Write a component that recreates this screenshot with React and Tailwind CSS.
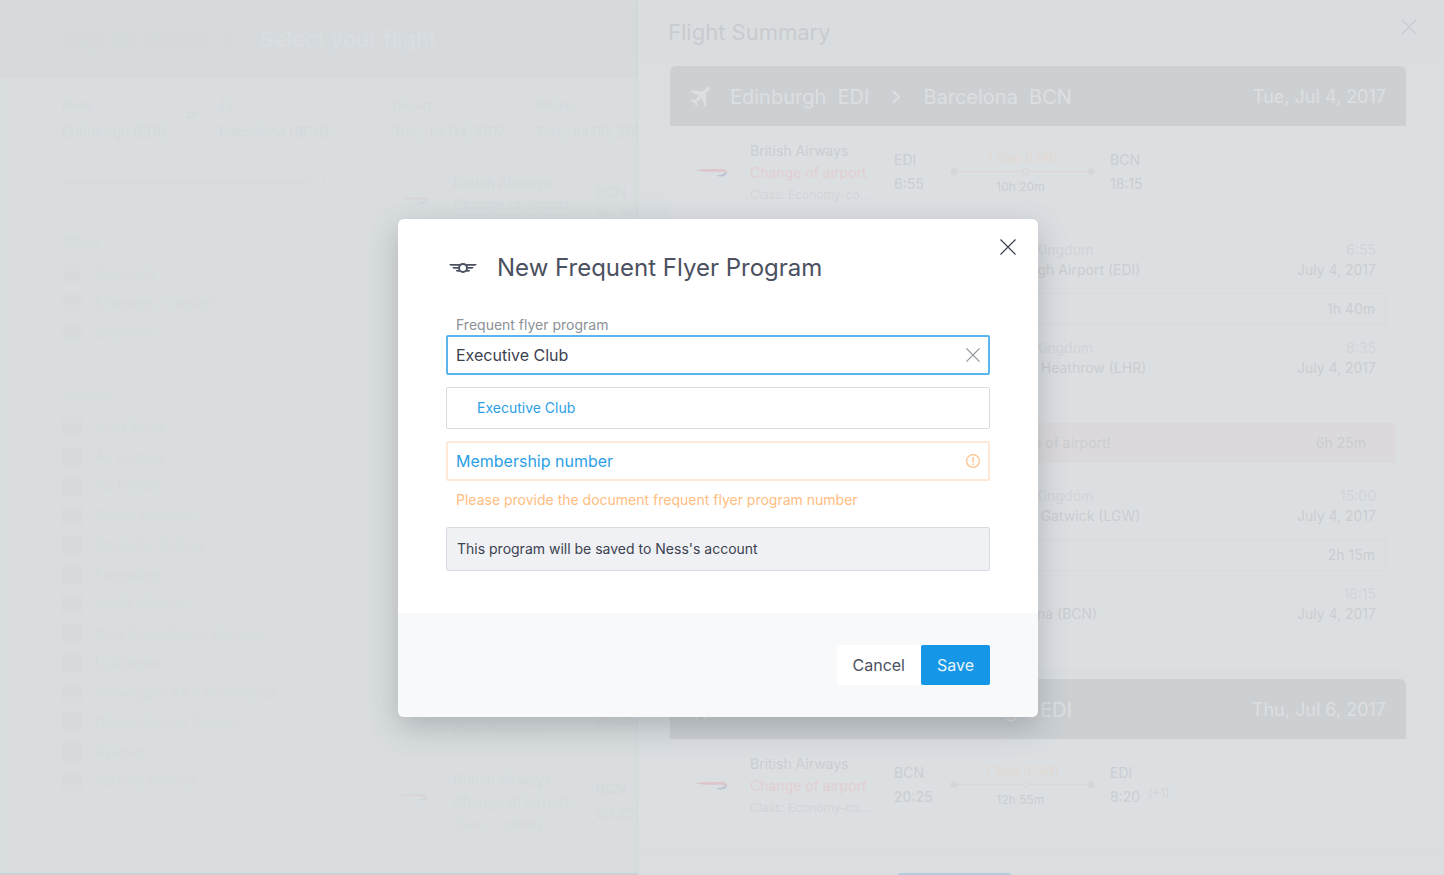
import React from "react";

const airlines = [
  "Aer Lingus",
  "Air Europa",
  "Air France",
  "British Airways",
  "Brussels Airlines",
  "Eurowings",
  "Iberia Airlines",
  "KLM Royal Dutch Airlines",
  "Lufthansa",
  "Norwegian Air International",
  "Norwegian Air Shuttle",
  "Ryanair",
  "Turkish Airlines",
];

function Cross({ className }) {
  return (
    <svg className={className} viewBox="0 0 16 16" fill="none" stroke="currentColor" strokeWidth="1.2" aria-hidden="true">
      <path d="M0.5 0.5 L15.5 15.5 M15.5 0.5 L0.5 15.5" vectorEffect="non-scaling-stroke" />
    </svg>
  );
}

function Wings() {
  return (
    <svg className="h-3 w-7" viewBox="0 0 28 12" aria-hidden="true">
      <path
        d="M.6 2h10.600L10 3.700H2.200C1.200 3.700.2 2.900.6 2zM27.400 2H16.800L18 3.700h7.800c1 0 2-.8 1.600-1.700zM3.600 5h5.600l-.2 1.700H5.200C4.200 6.700 3.400 6 3.600 5zM24.400 5h-5.600l.2 1.700h3.800c1 0 1.800-.7 1.600-1.700zM7 8h2.700l1.300 1.700H8.600C7.600 9.700 6.800 9 7 8zM21 8h-2.700L17 9.700h2.400c1 0 1.800-.7 1.600-1.700z"
        fill="#4b5160"
      />
      <circle cx="14" cy="5.900" r="4" fill="none" stroke="#4b5160" strokeWidth="2" />
    </svg>
  );
}

function Plane() {
  return (
    <svg className="size-5" viewBox="0 0 20 20" fill="#dcdfe2" aria-hidden="true">
      <path d="M19.6.4c-.7-.7-2.2-.3-3.200.7L12.900 4.600 1.400 3.300 0 4.800l9.100 3.700-3.900 4.500-3.700-.4-1.100 1.100 3.600 2.100L6.200 19.600l1.100-1.100-.4-3.700 4.600-3.900L15.200 20l1.500-1.400L15.400 7.100l3.500-3.500c1-1 1.400-2.500.7-3.200z" />
    </svg>
  );
}

function BritishAirwaysMark({ className }) {
  return (
    <svg className={className} viewBox="0 0 32 10" aria-hidden="true">
      <path d="M0 2.200C4 1 10 1.400 17 1.100c5-.2 9-.4 11.500.3 3 .9 3.500 3 1.900 4.800-.2-1.700-1.800-2.300-4.800-2.400C18 3.600 7 4.600 0 2.200z" fill="#dec5c9" />
      <path d="M20 7.300c3 .3 6.500-.4 9.300-2.700l1.600.2C30.300 8 24.500 10.200 20 7.300z" fill="#bbc5d4" />
    </svg>
  );
}

function ResultCard() {
  return (
    <div className="flex text-[#d5d9dc]">
      <BritishAirwaysMark className="mt-6 h-[9px] w-7 opacity-30" />
      <div className="ml-[25px] flex w-[143px] flex-col text-sm leading-[22px]">
        <span>British Airways</span>
        <span className="text-[#d6dadd]">Change of airport</span>
        <span className="text-xs leading-[22px] text-[#d7dbdd]">Class: Economy</span>
      </div>
      <div className="flex flex-col pt-2 text-sm leading-6">
        <span>BCN</span>
        <span>20:25</span>
      </div>
    </div>
  );
}

function SearchField({ label, value, className }) {
  return (
    <div className={className}>
      <div className="text-xs leading-5">{label}</div>
      <div className="mt-1 text-sm leading-6 whitespace-nowrap">{value}</div>
    </div>
  );
}

function SearchPage() {
  return (
    <main className="min-h-screen text-[#d6dadc]">
      <header className="flex h-[78px] items-center bg-[#d6dadd] pl-16 text-[22px]">
        <span className="w-[196px] text-[#d5d9dc]">Trip ID: 21445 &nbsp;/</span>
        <h1 className="text-[#dadee1]">Select your flight</h1>
      </header>
      <div className="flex pt-[18px] pl-[62px] text-[#d5d9dc]">
        <SearchField label="From" value="Edinburgh (EDI)" className="w-[124px]" />
        <span className="mt-2 w-[33px] text-sm">⇄</span>
        <SearchField label="To" value="Barcelona (BCN)" className="w-[174px]" />
        <SearchField label="Depart" value="Tue, Jul 04, 2017" className="w-[142px]" />
        <SearchField label="Return" value="Thu, Jul 06, 2017" />
      </div>
      <div className="flex pt-7 pl-[62px]">
        <aside className="w-[338px]">
          <div className="mt-[2px] flex w-[263px] items-center">
            <div className="h-px flex-1 bg-[#d5d9dc]" />
            <div className="size-4 rounded-full border border-[#d7dbdd]" />
          </div>
          <h2 className="mt-[42px] text-sm leading-5">Class</h2>
          <ul className="mt-[11px] flex flex-col gap-[10px] text-sm leading-5">
            {["Economy", "Economy-comfort", "Business"].map((name) => (
              <li key={name} className="flex items-center gap-[13px] text-[#d7dbdd]">
                <span className="size-5 rounded-full bg-[#d7dbde]" />
                {name}
              </li>
            ))}
          </ul>
          <h2 className="mt-[43px] text-sm leading-5">Airlines</h2>
          <ul className="mt-[11px] flex h-[374px] flex-col justify-between text-sm leading-5">
            {airlines.map((name) => (
              <li key={name} className="flex items-center gap-[13px] text-[#d7dbdd]">
                <span className="size-5 bg-[#d7dbde]" />
                {name}
              </li>
            ))}
          </ul>
        </aside>
        <section className="flex flex-col">
          <ResultCard />
          <div className="h-[438px]" />
          <ResultCard />
          <div className="h-[27px]" />
          <ResultCard />
        </section>
      </div>
    </main>
  );
}

function Route({ from, to, date }) {
  return (
    <header className="flex h-[60px] items-center rounded-t-md bg-[#ccd0d3] px-5 pt-[2px] text-xl text-[#dcdfe2]">
      <Plane />
      <h3 className="ml-5 flex items-center whitespace-pre">
        {from}
        <svg className="mx-[21px] h-[14px] w-3" viewBox="0 0 12 14" fill="none" stroke="currentColor" strokeWidth="2" aria-hidden="true">
          <path d="M3 1l6 6-6 6" />
        </svg>
        {to}
      </h3>
      <span className="ml-auto text-lg">{date}</span>
    </header>
  );
}

function Leg({ from, depart, to, arrive, plus, stop, duration, lineColor }) {
  return (
    <div className="flex h-[90px] pl-[26px] pt-[14px] text-sm text-[#cacdd1]">
      <BritishAirwaysMark className="mt-7 h-[10px] w-8" />
      <div className="ml-[22px] flex w-36 flex-col leading-[22px]">
        <span>British Airways</span>
        <span className="text-[#e2ced1]">Change of airport</span>
        <span className="text-xs leading-[22px] text-[#d1d4d8]">Class: Economy-co...</span>
      </div>
      <div className="flex w-14 flex-col pt-2 leading-6">
        <span>{from}</span>
        <span>{depart}</span>
      </div>
      <div className="flex w-[145px] flex-col items-center pt-[10px] text-xs leading-4">
        <span className="text-[#e3d8cf]">{stop}</span>
        <svg className="h-[9px] w-full" viewBox="0 0 145 9" aria-hidden="true">
          <path d="M7 5.500h131" stroke={lineColor} />
          <circle cx="4" cy="5.500" r="3.500" fill="#d3d7da" />
          <circle cx="76" cy="5.500" r="3" fill="#dcdfe2" stroke="#d3d7da" />
          <circle cx="141" cy="5.500" r="3.500" fill="#d3d7da" />
        </svg>
        <span className="mt-1 pr-1">{duration}</span>
      </div>
      <div className="ml-[15px] flex flex-col pt-2 leading-6">
        <span>{to}</span>
        <span className="flex">
          {arrive}
          {plus && <span className="ml-2 text-xs leading-4 text-[#d1d4d8]">{plus}</span>}
        </span>
      </div>
    </div>
  );
}

function Stop({ country, airport, time }) {
  return (
    <div className="flex justify-between pr-[30px] pl-[317px] text-sm leading-5 text-[#cacdd1]">
      <div>
        <div className="text-[#d1d4d8]">{country}</div>
        <div>{airport}</div>
      </div>
      <div className="text-right">
        <div className="text-[#d1d4d8]">{time}</div>
        <div>July 4, 2017</div>
      </div>
    </div>
  );
}

function FlightTime({ children }) {
  return (
    <div className="mx-5 flex h-8 items-center justify-end border border-[#d7dadd] pr-[10px] text-sm text-[#cacdd1]">
      {children}
    </div>
  );
}

function FlightSummary() {
  return (
    <section className="absolute inset-y-0 right-0 w-[806px] overflow-hidden bg-[#dadee1] shadow-[0_0_6px_rgba(80,90,100,0.05)]">
      <header className="flex h-[57px] items-start justify-between bg-[#dadddf] pr-[27px] pl-[30px]">
        <h2 className="mt-4 text-[22px] leading-8 text-[#c8cbcf]">Flight Summary</h2>
        <button type="button" aria-label="Close summary" className="mt-[19px] text-[#c8cbcf]">
          <Cross className="size-4" />
        </button>
      </header>
      <div className="flex flex-col gap-[10px] border-b border-[#d7dbdd] pt-[9px] pr-[38px] pl-8">
        <article className="bg-[#dcdfe2]">
          <Route from="Edinburgh  EDI" to="Barcelona  BCN" date="Tue, Jul 4, 2017" />
          <Leg from="EDI" depart="6:55" to="BCN" arrive="18:15" stop="1 Stop (LHR)" duration="10h 20m" lineColor="#e0d5d6" />
          <div className="flex flex-col border-b border-[#d9dcdf] pt-6 pb-11">
            <Stop country="United Kingdom" airport="Edinburgh Airport (EDI)" time="6:55" />
            <div className="py-[13px]">
              <FlightTime>1h 40m</FlightTime>
            </div>
            <Stop country="United Kingdom" airport="London Heathrow (LHR)" time="8:35" />
            <div className="mx-[10px] mt-[45px] mb-[23px] flex h-10 items-center justify-between bg-[#dcd9dc] pr-[30px] pl-[310px] text-sm text-[#cacdd1]">
              <span>Change of airport!</span>
              <span>6h 25m</span>
            </div>
            <Stop country="United Kingdom" airport="London Gatwick (LGW)" time="15:00" />
            <div className="py-[13px]">
              <FlightTime>2h 15m</FlightTime>
            </div>
            <Stop country="Spain" airport="Barcelona (BCN)" time="18:15" />
          </div>
        </article>
        <article className="bg-[#dcdfe2] pb-5">
          <Route from="Barcelona  BCN" to="Edinburgh  EDI" date="Thu, Jul 6, 2017" />
          <Leg from="BCN" depart="20:25" to="EDI" arrive="8:20" plus="(+1)" stop="1 Stop (LGW)" duration="12h 55m" lineColor="#d6dadd" />
        </article>
      </div>
      <div className="mt-[23px] ml-[259px] h-8 w-[115px] rounded-sm bg-[#b4cbdc]" />
    </section>
  );
}

function ProgramDialog() {
  return (
    <div className="absolute inset-0 flex items-start justify-center pt-[219px] pr-2">
      <form
        role="dialog"
        aria-labelledby="dialog-title"
        className="relative w-full max-w-[640px] overflow-hidden rounded-md bg-white text-[#3c4250] shadow-[0_10px_30px_rgba(70,80,85,0.3)]"
        onSubmit={(event) => event.preventDefault()}
      >
        <button type="button" aria-label="Close" className="absolute top-5 right-[22px] text-[#3c4250]">
          <Cross className="size-4" />
        </button>
        <div className="px-12 pt-[33px] pb-[42px]">
          <div className="flex items-center gap-5 pl-[3px] text-[#4b5160]">
            <Wings />
            <h2 id="dialog-title" className="text-2xl leading-8">
              New Frequent Flyer Program
            </h2>
          </div>
          <label htmlFor="program" className="mt-[31px] block px-[10px] text-sm leading-5 text-[#8d9198]">
            Frequent flyer program
          </label>
          <div className="flex h-10 items-center rounded-xs border-2 border-[#5cb5ec] px-2">
            <input id="program" type="text" defaultValue="Executive Club" className="min-w-0 flex-1 text-base outline-none" />
            <button type="button" aria-label="Clear" className="text-[#8d9198]">
              <Cross className="size-[14px]" />
            </button>
          </div>
          <button
            type="button"
            className="mt-3 flex h-[42px] w-full items-center rounded-xs border border-[#d9dbdf] px-[30px] text-sm text-[#2b9fe6]"
          >
            Executive Club
          </button>
          <div className="mt-3 flex h-10 items-center rounded-xs border-2 border-[#ffe8d5] px-2">
            <input
              type="text"
              aria-label="Membership number"
              aria-describedby="membership-error"
              placeholder="Membership number"
              className="min-w-0 flex-1 text-base outline-none placeholder:text-[#2b9fe6]"
            />
            <svg className="size-[14px]" viewBox="0 0 14 14" fill="none" stroke="#ffc08a" aria-hidden="true">
              <circle cx="7" cy="7" r="6.400" strokeWidth="1.200" />
              <path d="M7 3v5.200M7 9.500v1.500" strokeWidth="1.400" />
            </svg>
          </div>
          <p id="membership-error" className="mt-[9px] px-[10px] text-sm leading-5 text-[#ffbd80]">
            Please provide the document frequent flyer program number
          </p>
          <p className="mt-[17px] flex h-11 items-center rounded-xs border border-[#d7dae0] bg-[#eff1f5] px-[10px] text-sm">
            This program will be saved to Ness's account
          </p>
        </div>
        <div className="flex justify-end bg-[#f8f9fb] px-12 py-8 text-base">
          <button type="button" className="h-10 rounded-xs bg-white px-4 text-[#4b5160]">
            Cancel
          </button>
          <button type="submit" className="h-10 rounded-xs bg-[#1596e6] px-4 text-[#e8f5fe]">
            Save
          </button>
        </div>
      </form>
    </div>
  );
}

export default function App() {
  return (
    <div className="relative h-screen overflow-hidden bg-[#d9dddf] font-['Inter',sans-serif] shadow-[inset_0_-2px_1px_#cdd1d3]">
      <SearchPage />
      <FlightSummary />
      <ProgramDialog />
    </div>
  );
}
